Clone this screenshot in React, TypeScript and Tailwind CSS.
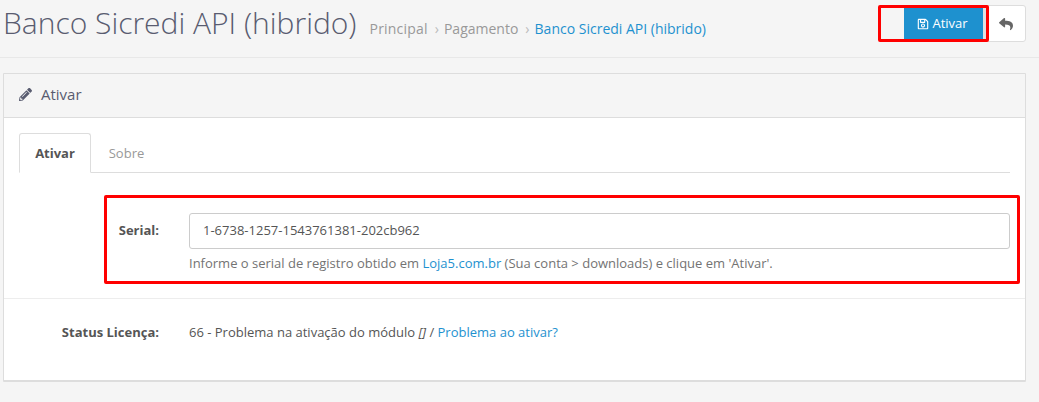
import React from 'react';
import { FaPencilAlt, FaRegSave, FaReply } from 'react-icons/fa';

const Header: React.FC = () => (
  <div className="relative flex h-[58px] items-start justify-between border-b border-[#e8e8e8] pl-[3px] pr-[13px]">
    <div className="flex items-baseline pt-[3px]">
      <h1 className="text-[30px] leading-[40px] font-light text-[#595c70]">Banco Sicredi API (hibrido)</h1>
      <div className="ml-[13px] flex items-baseline text-[14px] text-[#999]">
        <span className="tracking-[0.2px]">Principal</span>
        <span className="ml-[7px] mr-[5px] text-[#bbb]">›</span>
        <span>Pagamento</span>
        <span className="ml-[7px] mr-[5px] text-[#bbb]">›</span>
        <span className="text-[#1e91cf]">Banco Sicredi API (hibrido)</span>
      </div>
    </div>
    <div className="mt-[5px] flex h-[37px]">
      <div className="flex w-[23px] rounded-l-[3px]" />
      <button className="flex w-[79px] my-[3px] items-center justify-center gap-[3px] bg-[#1e91cf] pr-[2px] text-[13px] text-white">
        <FaRegSave className="text-[12px]" />
        Ativar
      </button>
      <div className="w-[3px] my-[3px] bg-[#e2e2e2]" />
      <button className="flex w-[40px] items-center justify-center rounded-r-[3px] border border-[#ddd] bg-white text-[#666]">
        <FaReply className="text-[14px]" />
      </button>
    </div>
    <div className="absolute left-[878px] top-[5px] h-[37px] w-[111px] rounded-[2px] border-[3px] border-[#f00]" />
  </div>
);

const Tabs: React.FC = () => (
  <div className="flex h-[40px] border-b border-[#ddd]">
    <div className="mb-[-1px] flex h-[40px] w-[72px] items-center justify-center rounded-t-[3px] border border-b-white border-[#ddd] bg-white pt-[2px] font-bold text-[#555]">
      Ativar
    </div>
    <div className="flex w-[71px] items-center justify-center pt-[2px] text-[#999]">Sobre</div>
  </div>
);

export default function App() {
  return (
    <div className="relative h-[402px] w-[1039px] overflow-hidden bg-[#f5f5f5] font-['Open_Sans',sans-serif] text-[13px] text-[#666]">
      <Header />
      <div className="mx-[3px] mt-[15px] h-[309px] w-[1023px] rounded-[1px] border border-[#ddd] border-b-2 bg-white">
        <div className="flex h-[44px] items-center gap-[9px] border-b border-[#ddd] bg-[#f5f5f5] pb-[2px] pl-[15px] text-[15px] text-[#595c70]">
          <FaPencilAlt className="text-[13px]" />
          Ativar
        </div>
        <div className="px-[15px] pt-[15px]">
          <Tabs />
        </div>
        <div className="relative flex h-[126px] border-b border-[#ededed] pl-[15px] pr-[15px] pt-[40px]">
          <label className="w-[140px] pt-[8px] text-right font-bold text-[#555]">Serial:</label>
          <div className="ml-[30px] flex-1">
            <div className="flex h-[36px] items-center rounded-[3px] border border-[#ccc] bg-white pl-[13px] text-[#555]">
              1-6738-1257-1543761381-202cb962
            </div>
            <p className="mt-[5px] text-[#737373]">
              Informe o serial de registro obtido em <a className="text-[#1e91cf]">Loja5.com.br</a> (Sua conta &gt; downloads) e clique em 'Ativar'.
            </p>
          </div>
          <div className="absolute left-[100px] top-[22px] h-[89px] w-[916px] rounded-[2px] border-[3px] border-[#f00]" />
        </div>
        <div className="flex pl-[15px] pr-[15px] pt-[24px]">
          <label className="w-[140px] text-right font-bold text-[#555]">Status Licença:</label>
          <p className="ml-[30px] text-[#555]">
            66 - Problema na ativação do módulo <i>[]</i> / <a className="text-[#1e91cf]">Problema ao ativar?</a>
          </p>
        </div>
      </div>
    </div>
  );
}
